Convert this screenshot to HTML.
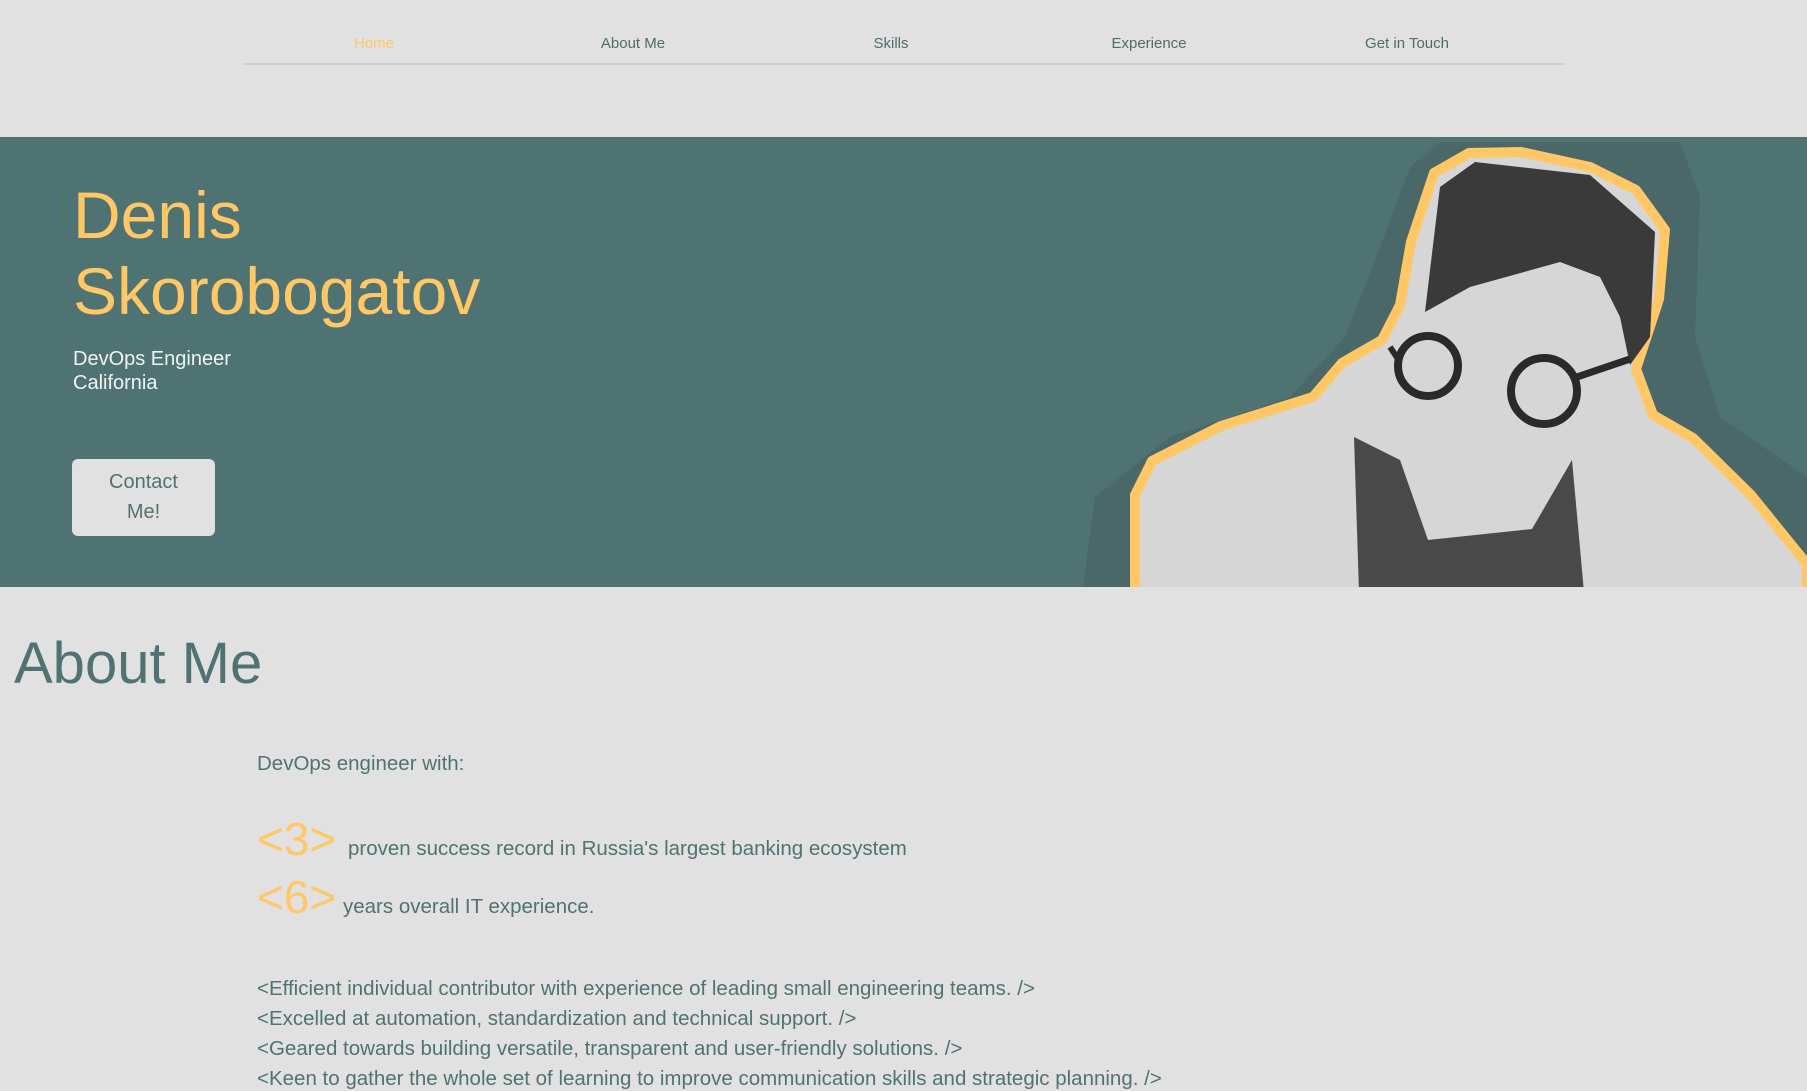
<!DOCTYPE html>
<html><head><meta charset="utf-8"><style>
*{margin:0;padding:0;box-sizing:border-box}
body{width:1807px;height:1076px;overflow:hidden;background:#e1e1e1;font-family:"Liberation Sans",sans-serif;position:relative}
.nav{position:absolute;left:244px;top:0;width:1320px;height:65px;border-bottom:2px solid #c3d0cd}
.nav span{position:absolute;top:35px;font-size:15px;color:#4f6b6a;transform:translateX(-50%);white-space:nowrap}
.hero{position:absolute;left:0;top:137px;width:1807px;height:450px;background:#4f7372;overflow:hidden}
.name{position:absolute;left:73px;top:40px;color:#ffc766;font-size:66px;line-height:76px;white-space:nowrap}
.sub{position:absolute;left:73px;top:210px;color:#f2f2f2;font-size:20px;line-height:24px}
.btn{position:absolute;left:72px;top:322px;width:143px;height:77px;background:#e1e1e1;border-radius:6px;color:#4f7372;font-size:20px;line-height:30px;text-align:center;padding-top:8px}
h1{position:absolute;left:14px;top:630px;font-weight:normal;font-size:58px;color:#4f7372;white-space:nowrap}
.t{position:absolute;left:257px;color:#4f7372;font-size:20.5px;white-space:nowrap}
.big{color:#ffc766;font-size:46px;position:absolute;left:257px;white-space:nowrap}
</style></head><body>
<div class="nav">
<span style="left:130px;color:#ffc766">Home</span>
<span style="left:389px">About Me</span>
<span style="left:647px">Skills</span>
<span style="left:905px">Experience</span>
<span style="left:1163px">Get in Touch</span>
</div>
<div class="hero">
<svg width="1807" height="450" style="position:absolute;left:0;top:0">
<polygon fill="#4a6868" points="1083,450 1095,360 1170,300 1290,260 1345,200 1380,110 1410,30 1440,5 1680,5 1700,60 1695,200 1720,280 1807,340 1807,450"/>
<polygon fill="#d6d6d6" stroke="#ffc766" stroke-width="10" stroke-linejoin="round" points="1135,455 1135,358 1152,324 1221,289 1313,260 1342,226 1382,203 1400,168 1411,105 1434,36 1469,16 1521,15 1590,30 1636,53 1665,93 1659,162 1636,232 1653,278 1693,301 1751,358 1807,427 1807,455"/>
<polygon fill="#3a3a3a" points="1440,50 1475,25 1590,38 1655,95 1650,200 1630,228 1620,180 1600,140 1560,125 1470,150 1425,175"/>
<polygon fill="#494949" points="1354,300 1400,323 1428,403 1532,392 1572,323 1584,455 1359,455"/>
<circle cx="1428" cy="229" r="30" fill="none" stroke="#2a2a2a" stroke-width="8"/>
<circle cx="1544" cy="254" r="33" fill="none" stroke="#2a2a2a" stroke-width="8"/>
<line x1="1390" y1="210" x2="1398" y2="222" stroke="#2a2a2a" stroke-width="6"/>
<line x1="1577" y1="240" x2="1630" y2="222" stroke="#2a2a2a" stroke-width="7"/>
</svg>
<div class="name">Denis<br>Skorobogatov</div>
<div class="sub">DevOps Engineer<br>California</div>
<div class="btn">Contact<br>Me!</div>
</div>
<h1>About Me</h1>
<div class="t" style="top:752px">DevOps engineer with:</div>
<div class="big" style="top:812px">&lt;3&gt;</div>
<div class="t" style="top:837px;left:348px">proven success record in Russia's largest banking ecosystem</div>
<div class="big" style="top:870px">&lt;6&gt;</div>
<div class="t" style="top:895px;left:343px">years overall IT experience.</div>
<div class="t" style="top:977px">&lt;Efficient individual contributor with experience of leading small engineering teams. /&gt;</div>
<div class="t" style="top:1007px">&lt;Excelled at automation, standardization and technical support. /&gt;</div>
<div class="t" style="top:1037px">&lt;Geared towards building versatile, transparent and user-friendly solutions. /&gt;</div>
<div class="t" style="top:1067px">&lt;Keen to gather the whole set of learning to improve communication skills and strategic planning. /&gt;</div>
</body></html>
